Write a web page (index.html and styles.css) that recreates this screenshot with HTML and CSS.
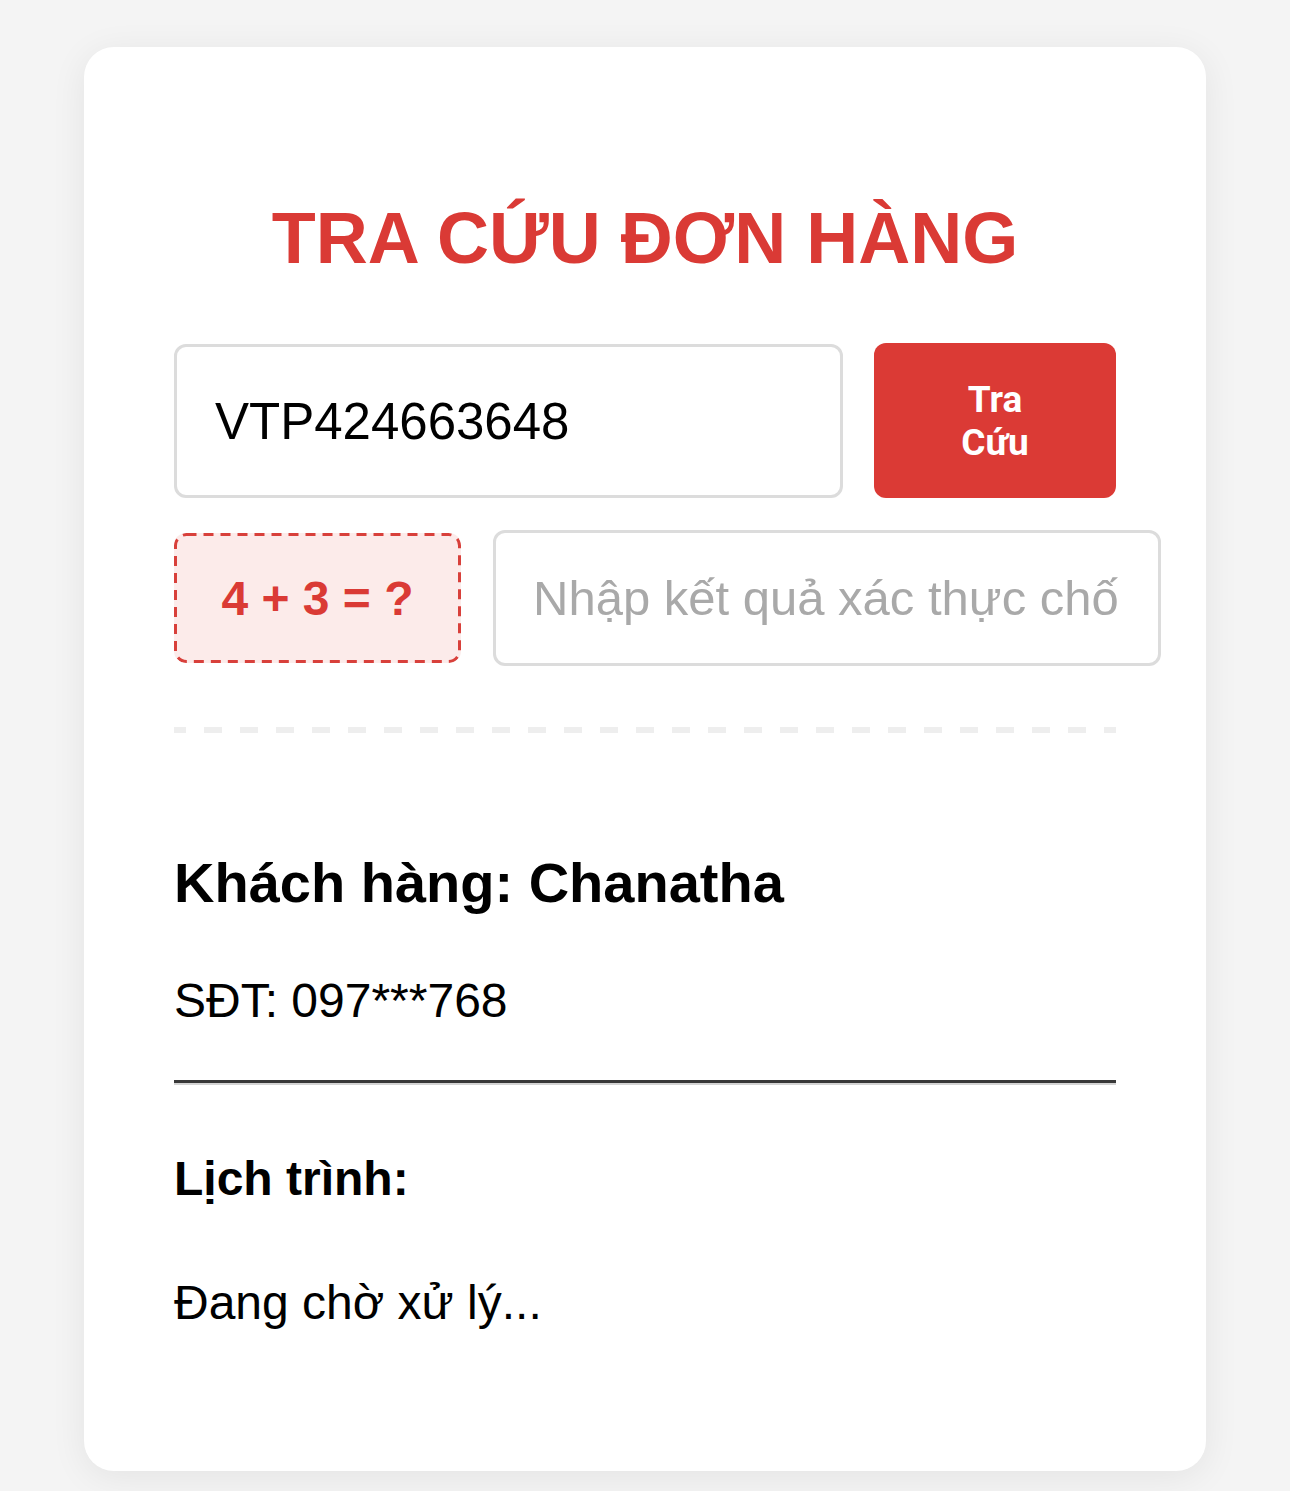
FILE: index.html
```html
<!DOCTYPE html>
<html lang="vi">
<head>
<meta charset="utf-8">
<title>Tra cứu đơn hàng</title>
<link rel="stylesheet" href="styles.css">
</head>
<body>
<div class="card">
  <h2 class="title">TRA CỨU ĐƠN HÀNG</h2>
  <div class="search-row">
    <input class="field field-main" type="text" value="VTP424663648">
    <button class="btn" type="button"><span>Tra Cứu</span></button>
  </div>
  <div class="captcha-row">
    <div class="captcha">4 + 3 = ?</div>
    <input class="field field-captcha" type="text" placeholder="Nhập kết quả xác thực chống bot">
  </div>
  <div class="divider"></div>
  <h3 class="customer">Khách hàng: Chanatha</h3>
  <p class="phone">SĐT: 097***768</p>
  <hr class="rule">
  <h4 class="schedule">Lịch trình:</h4>
  <p class="status">Đang chờ xử lý...</p>
</div>
</body>
</html>
```

FILE: styles.css
```css
html, body {
  margin: 0;
  padding: 0;
}
body {
  background: #f4f4f4;
  font-family: "Liberation Sans", Arial, sans-serif;
  color: #000;
  padding-top: 47px;
  height: 1491px;
  box-sizing: border-box;
}
.card {
  width: 1122px;
  height: 1424px;
  margin: 0 auto;
  box-sizing: border-box;
  background: #fff;
  border-radius: 30px;
  box-shadow: 0 6px 36px rgba(0, 0, 0, 0.07);
  padding: 90px 90px 0 90px;
  display: flex;
  flex-direction: column;
}
.title {
  margin: 60px 0 0 0;
  font-size: 72px;
  line-height: 83px;
  font-weight: 700;
  color: #da3a35;
  text-align: center;
}
.search-row {
  margin-top: 63px;
  display: flex;
  gap: 31px;
  height: 155px;
}
.field {
  box-sizing: border-box;
  border: 3px solid #dcdcdc;
  border-radius: 12px;
  font-family: "Liberation Sans", Arial, sans-serif;
  font-size: 51px;
  color: #000;
  padding: 0 38px;
  outline: none;
  background: #fff;
}
.field::placeholder {
  color: #a9a9a9;
}
.field-main {
  flex: 1;
  min-width: 0;
  height: 154px;
  margin-top: 1px;
}
.btn {
  width: 242px;
  height: 155px;
  flex: none;
  border: none;
  border-radius: 12px;
  background: #db3a35;
  color: #fff;
  font-family: Roboto, "Liberation Sans", sans-serif;
  font-weight: 700;
  font-size: 37px;
  line-height: 43px;
  display: flex;
  align-items: center;
  justify-content: center;
  padding: 0;
}
.btn span {
  width: min-content;
  text-align: center;
}
.captcha-row {
  margin-top: 32px;
  display: flex;
  align-items: center;
  gap: 32px;
  height: 136px;
  width: 987px;
}
.captcha {
  box-sizing: border-box;
  width: 287px;
  height: 130px;
  flex: none;
  border-radius: 12px;
  background-color: #fcebea;
  background-image: url("data:image/svg+xml,%3Csvg xmlns='http://www.w3.org/2000/svg' width='287' height='130'%3E%3Crect x='1.5' y='1.5' width='284' height='127' rx='11' ry='11' fill='none' stroke='%23d8403b' stroke-width='3' stroke-dasharray='10 7'/%3E%3C/svg%3E");
  background-repeat: no-repeat;
  color: #da3a35;
  font-size: 48px;
  font-weight: 700;
  display: flex;
  align-items: center;
  justify-content: center;
}
.field-captcha {
  width: 668px;
  height: 136px;
  flex: none;
  font-size: 49px;
  padding: 0 37px;
}
.divider {
  margin-top: 61px;
  height: 6px;
  background-image: repeating-linear-gradient(to right, #eeeeee 0 18px, transparent 18px 36px);
  background-position: -6px 0;
}
.customer {
  margin: 118px 0 0 0;
  font-size: 56px;
  line-height: 64px;
  font-weight: 700;
}
.phone {
  margin: 58px 0 0 0;
  font-size: 48px;
  line-height: 55px;
}
.rule {
  margin: 52px 0 0 0;
  height: 0;
  border: none;
  border-top: 3px solid #383838;
  border-bottom: 2px solid #d4d4d4;
}
.schedule {
  margin: 66px 0 0 0;
  font-size: 48px;
  line-height: 55px;
  font-weight: 700;
}
.status {
  margin: 69px 0 0 0;
  font-size: 48px;
  line-height: 55px;
}
```
